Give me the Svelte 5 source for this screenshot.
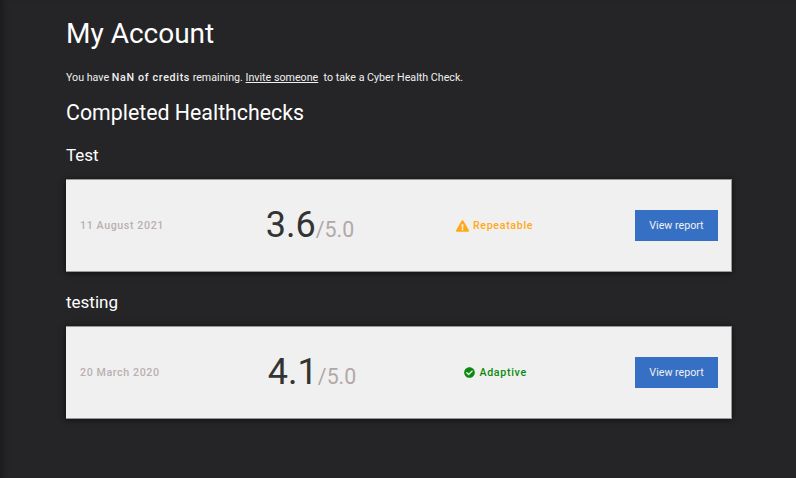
<script>
  const reports = [
    { name: 'Test', date: '11 August 2021', score: '3.6', level: 'Repeatable', kind: 'warn' },
    { name: 'testing', date: '20 March 2020', score: '4.1', level: 'Adaptive', kind: 'ok' }
  ];
</script>

<div class="page">
  <h1>My Account</h1>
  <p class="intro">
    You have <strong>NaN of credits</strong> remaining. <a href="#invite">Invite someone</a>&nbsp; to take a Cyber Health Check.
  </p>
  <h2>Completed Healthchecks</h2>

  {#each reports as report}
    <h3>{report.name}</h3>
    <div class="card">
      <span class="date">{report.date}</span>
      <span class="score">{report.score}<small>/5.0</small></span>
      <span class="level {report.kind}">
        {#if report.kind === 'warn'}
          <svg width="13" height="12" viewBox="0 0 576 512">
            <path fill="currentColor" d="M569.5 440C588 472 564.8 512 527.9 512H48.1c-36.9 0-60-40-41.6-72L246.4 24c18.500-32 64.700-32 83.200 0l239.900 416zM288 354c-25.400 0-46 20.600-46 46s20.600 46 46 46 46-20.600 46-46-20.600-46-46-46zm-43.700-165.300l7.400 136c.3 6.400 5.600 11.300 12 11.300h48.500c6.400 0 11.600-5 12-11.300l7.400-136c.4-6.900-5.100-12.700-12-12.700h-63.400c-6.900 0-12.400 5.800-12 12.700z"/>
          </svg>
        {:else}
          <svg width="11" height="11" viewBox="0 0 512 512">
            <path fill="currentColor" d="M504 256c0 137-111 248-248 248S8 393 8 256 119 8 256 8s248 111 248 248zM227.300 387.300l184-184c6.200-6.200 6.200-16.400 0-22.600l-22.600-22.600c-6.200-6.200-16.400-6.200-22.600 0L216 308.100l-70.100-70.100c-6.200-6.200-16.400-6.200-22.600 0l-22.600 22.600c-6.200 6.200-6.200 16.400 0 22.600l104 104c6.200 6.200 16.400 6.200 22.600 0z"/>
          </svg>
        {/if}
        {report.level}
      </span>
      <button>View report</button>
    </div>
  {/each}
</div>

<style>
  :global(body) {
    background: #252527;
    font-family: Roboto, sans-serif;
  }

  .page {
    height: 478px;
    box-sizing: border-box;
    padding: 0 64px 0 66px;
    color: #fff;
    overflow: hidden;
    box-shadow: inset 7px 0 7px -5px rgba(0, 0, 0, 0.35);
  }

  h1 {
    margin: 0;
    padding-top: 17px;
    font-size: 28px;
    line-height: 34px;
    font-weight: 400;
  }

  .intro {
    margin: 19px 0 0;
    font-size: 10.7px;
    line-height: 16px;
    color: #f0f0f0;
  }

  .intro strong {
    font-weight: 500;
    letter-spacing: 0.67px;
  }

  .intro a {
    color: inherit;
    text-decoration: underline;
  }

  h2 {
    margin: 13px 0 0;
    font-size: 21.33px;
    line-height: 28px;
    font-weight: 400;
  }

  h3 {
    margin: 16px 0 0;
    font-size: 17px;
    line-height: 24px;
    font-weight: 400;
  }

  .card + h3 {
    margin-top: 18px;
  }

  .card {
    height: 93px;
    margin-top: 12px;
    box-sizing: border-box;
    padding: 0 13px 0 14px;
    display: flex;
    align-items: center;
    justify-content: space-between;
    background: #f0f0f0;
    color: #333;
    border: solid #999;
    border-width: 1px 1px 1px 0;
    box-shadow: 0 1px 6px rgba(0, 0, 0, 0.6);
  }

  .date {
    font-size: 10.67px;
    font-weight: 500;
    letter-spacing: 0.6px;
    color: #b8b0b0;
  }

  .score {
    margin-top: 4px;
    font-size: 36px;
    line-height: 40px;
    color: #333;
  }

  .score small {
    font-size: 21.33px;
    font-weight: 400;
    color: #b0a8a8;
  }

  .level {
    display: flex;
    align-items: center;
    gap: 4px;
    font-size: 10.67px;
    font-weight: 500;
    letter-spacing: 0.67px;
  }

  .warn {
    color: #ffa915;
  }

  .ok {
    color: #0a8a0a;
  }

  button {
    width: 83px;
    height: 31px;
    padding: 0;
    border: none;
    background: #3670c4;
    color: #f0f0f0;
    font-family: inherit;
    font-size: 10.67px;
  }
</style>
